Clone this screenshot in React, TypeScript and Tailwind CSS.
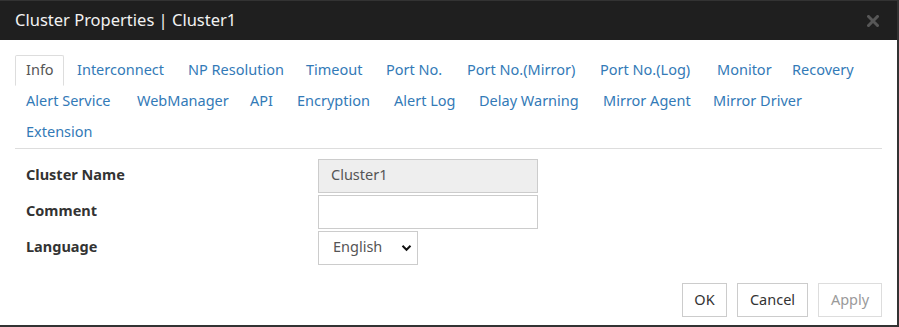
import clsx from "clsx";

const font = "font-['Noto_Sans',_'Liberation_Sans',_sans-serif]";

interface Tab {
	label: string;
	width: string;
	active?: boolean;
}

const tabs: Tab[] = [
	{ label: "Info", width: "w-[49px]", active: true },
	{ label: "Interconnect", width: "w-[109px]" },
	{ label: "NP Resolution", width: "w-[116px]" },
	{ label: "Timeout", width: "w-[78px]" },
	{ label: "Port No.", width: "w-[79px]" },
	{ label: "Port No.(Mirror)", width: "w-[131px]" },
	{ label: "Port No.(Log)", width: "w-[115px]" },
	{ label: "Monitor", width: "w-[73px]" },
	{ label: "Recovery", width: "w-[84px]" },
	{ label: "Alert Service", width: "w-[109px]" },
	{ label: "WebManager", width: "w-[111px]" },
	{ label: "API", width: "w-[45px]" },
	{ label: "Encryption", width: "w-[95px]" },
	{ label: "Alert Log", width: "w-[83px]" },
	{ label: "Delay Warning", width: "w-[122px]" },
	{ label: "Mirror Agent", width: "w-[108px]" },
	{ label: "Mirror Driver", width: "w-[109px]" },
	{ label: "Extension", width: "w-[88px]" },
];

function CloseIcon() {
	return (
		<svg width="12" height="12" viewBox="0 0 12 12" className="block">
			<path d="M1.5 1.5 L10.5 10.5 M10.5 1.5 L1.5 10.5" stroke="#575757" strokeWidth="3" strokeLinecap="square" />
		</svg>
	);
}

function Chevron() {
	return (
		<svg width="11" height="8" viewBox="0 0 11 8" className="block">
			<path d="M1.5 1.8 L5.5 5.8 L9.5 1.8" stroke="#111" strokeWidth="2" fill="none" />
		</svg>
	);
}

function Button({ label, width, disabled }: { label: string; width: string; disabled?: boolean }) {
	return (
		<div
			className={clsx(
				"flex h-[34px] items-center justify-center border pb-[1px] text-[14.5px]",
				width,
				disabled ? "border-[#ddd] text-[#9a9a9a]" : "border-[#ccc] text-[#333]",
			)}
		>
			{label}
		</div>
	);
}

export default function App() {
	return (
		<div className={clsx("w-[899px] h-[327px] overflow-hidden bg-white border-t border-r-2 border-b-2 border-[#333]", font)}>
			<div className="flex h-[39px] items-center justify-between bg-[#1f1f1f] pl-[15px] pr-[18px]">
				<span className="pb-[1px] text-[16.5px] text-[#f2f2f2]">Cluster Properties | Cluster1</span>
				<CloseIcon />
			</div>

			<div className="px-[15px] pt-[15px]">
				<div className="flex flex-wrap border-b border-[#ddd]">
					{tabs.map((t) => (
						<div
							key={t.label}
							className={clsx(
								"mr-[2px] flex h-[31px] items-center border px-[10px] pb-[2px] text-[14.5px] whitespace-nowrap",
								t.width,
								t.active
									? "border-[#ddd] border-b-white bg-white text-[#555] rounded-t-[2px]"
									: "border-transparent text-[#337ab7]",
							)}
						>
							{t.label}
						</div>
					))}
				</div>

				<div className="mt-[10px] grid grid-cols-[292px_1fr] gap-y-[2px] pl-[11px] text-[14.5px]">
					<div className="flex items-center pb-[3px] font-bold text-[#333]">Cluster Name</div>
					<div className="flex h-[34px] w-[220px] items-center border border-[#ccc] bg-[#eee] px-[12px] pb-[2px] text-[#555]">
						Cluster1
					</div>
					<div className="flex items-center pb-[3px] font-bold text-[#333]">Comment</div>
					<div className="h-[34px] w-[220px] border border-[#ccc] bg-white" />
					<div className="flex items-center pb-[3px] font-bold text-[#333]">Language</div>
					<div className="flex h-[34px] w-[100px] items-center justify-between border border-[#ccc] bg-white pl-[14px] pr-[5px] text-[#555]">
						<span className="pb-[2px]">English</span>
						<Chevron />
					</div>
				</div>

				<div className="mt-[18px] flex justify-end gap-[10px]">
					<Button label="OK" width="w-[45px]" />
					<Button label="Cancel" width="w-[71px]" />
					<Button label="Apply" width="w-[64px]" disabled />
				</div>
			</div>
		</div>
	);
}
